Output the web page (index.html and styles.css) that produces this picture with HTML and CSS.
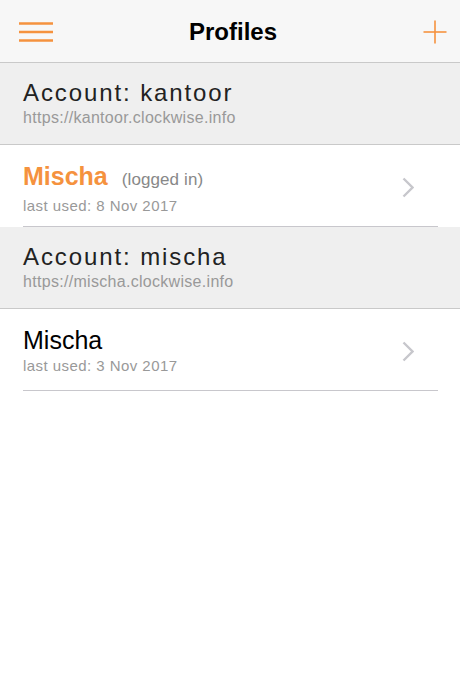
FILE: index.html
```html
<!DOCTYPE html>
<html>
<head>
<meta charset="utf-8">
<link rel="stylesheet" href="styles.css">
</head>
<body>
<div class="app">
  <header class="nav">
    <button class="nav-btn menu" aria-label="Menu">
      <svg width="34" height="20" viewBox="0 0 34 20"><g stroke="#f5923e" stroke-width="2.6" stroke-linecap="butt"><line x1="0" y1="1.5" x2="34" y2="1.5"/><line x1="0" y1="10" x2="34" y2="10"/><line x1="0" y1="18.5" x2="34" y2="18.5"/></g></svg>
    </button>
    <h1 class="title">Profiles</h1>
    <button class="nav-btn add" aria-label="Add">
      <svg width="24" height="24" viewBox="0 0 24 24"><g stroke="#f5923e" stroke-width="1.6"><line x1="0.5" y1="12" x2="23.5" y2="12"/><line x1="12" y1="0.5" x2="12" y2="23.5"/></g></svg>
    </button>
  </header>

  <section class="account">
    <div class="account-name">Account: kantoor</div>
    <div class="account-url">https://kantoor.clockwise.info</div>
  </section>
  <div class="row">
    <div class="row-body">
      <div class="row-text">
        <div class="row-title"><span class="name active">Mischa</span><span class="status">(logged in)</span></div>
        <div class="row-sub">last used: 8 Nov 2017</div>
      </div>
      <svg class="chevron" width="12" height="21" viewBox="0 0 12 21"><polyline points="1.5,1.5 10.5,10.5 1.5,19.5" fill="none" stroke="#c7c7cc" stroke-width="2.4"/></svg>
    </div>
  </div>

  <section class="account">
    <div class="account-name">Account: mischa</div>
    <div class="account-url">https://mischa.clockwise.info</div>
  </section>
  <div class="row">
    <div class="row-body">
      <div class="row-text">
        <div class="row-title"><span class="name">Mischa</span></div>
        <div class="row-sub">last used: 3 Nov 2017</div>
      </div>
      <svg class="chevron" width="12" height="21" viewBox="0 0 12 21"><polyline points="1.5,1.5 10.5,10.5 1.5,19.5" fill="none" stroke="#c7c7cc" stroke-width="2.4"/></svg>
    </div>
  </div>
</div>
</body>
</html>
```
FILE: styles.css
```css
* { box-sizing: border-box; }
html, body { margin: 0; padding: 0; background: #fff; }
body { font-family: "Liberation Sans", Arial, sans-serif; width: 460px; height: 690px; overflow: hidden; }

.nav {
  height: 63px;
  background: #f7f7f7;
  border-bottom: 1px solid #c9c9c9;
  display: grid;
  grid-template-columns: 1fr auto 1fr;
  align-items: center;
  padding: 0 13px 0 19px;
}
.nav-btn {
  background: none;
  border: 0;
  padding: 0;
  display: flex;
}
.menu { justify-self: start; margin-top: 1px; }
.add { justify-self: end; margin-top: 1px; }
.title {
  margin: 2px 0 0 0;
  font-size: 24px;
  font-weight: bold;
  color: #000;
  line-height: 28px;
}

.account {
  height: 82px;
  background: #efefef;
  border-bottom: 1px solid #c9c9c9;
  padding: 16px 23px 0;
}
.account-name {
  font-size: 24px;
  line-height: 28px;
  letter-spacing: 1.9px;
  color: #222;
}
.account-url {
  margin-top: 0;
  font-size: 16px;
  line-height: 21px;
  color: #999;
  letter-spacing: 0.3px;
}

.row {
  height: 82px;
  padding: 0 22px 0 23px;
  background: #fff;
}
.row-body {
  height: 82px;
  border-bottom: 1px solid #c8c7cc;
  display: flex;
  align-items: flex-start;
  justify-content: space-between;
  padding-right: 24px;
}
.row-text { padding-top: 17px; }
.row-title {
  font-size: 25px;
  line-height: 28px;
  color: #000;
}
.name.active { color: #f5923e; font-weight: bold; }
.status {
  font-size: 17px;
  color: #888;
  margin-left: 14px;
  letter-spacing: 0.1px;
}
.row-sub {
  margin-top: 1.5px;
  font-size: 15px;
  line-height: 20px;
  color: #999;
  letter-spacing: 0.45px;
}
.chevron { margin-top: 32px; }
```
